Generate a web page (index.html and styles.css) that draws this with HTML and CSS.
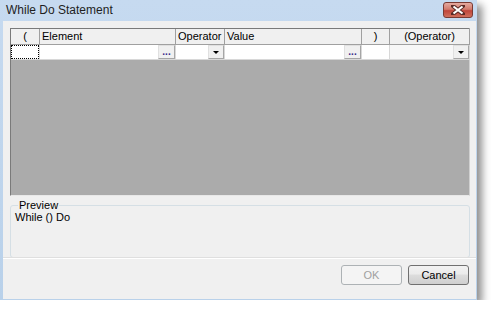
FILE: index.html
```html
<!DOCTYPE html>
<html lang="en">
<head>
    <meta charset="UTF-8">
    <title>While Do Statement</title>
    <link rel="stylesheet" href="styles.css">
</head>
<body>
    <div class="window">
        <div class="titlebar">
            <span class="title">While Do Statement</span>
            <div class="close">
                <svg width="14" height="10" viewBox="0 0 14 10">
                    <path d="M2 1 L12 9 M12 1 L2 9" stroke="#5a2a26" stroke-width="4" stroke-linecap="square"/>
                    <path d="M2.5 1.5 L11.5 8.5 M11.5 1.5 L2.5 8.5" stroke="#ffffff" stroke-width="2.2"/>
                </svg>
            </div>
        </div>
        <div class="client">
            <div class="main">
                <div class="grid">
                    <div class="row head">
                        <div class="cell center">(</div>
                        <div class="cell">Element</div>
                        <div class="cell">Operator</div>
                        <div class="cell">Value</div>
                        <div class="cell center">)</div>
                        <div class="cell center">(Operator)</div>
                    </div>
                    <div class="row data">
                        <div class="cell"><div class="focus"></div></div>
                        <div class="cell"><span class="ellipsis">...</span></div>
                        <div class="cell"><span class="drop"></span></div>
                        <div class="cell"><span class="ellipsis">...</span></div>
                        <div class="cell"></div>
                        <div class="cell shaded"><span class="drop"></span></div>
                    </div>
                    <div class="empty"></div>
                </div>
                <fieldset class="preview">
                    <legend>Preview</legend>
                    <div class="preview-text">While () Do</div>
                </fieldset>
            </div>
            <div class="buttons">
                <button class="btn" disabled>OK</button>
                <button class="btn">Cancel</button>
            </div>
        </div>
    </div>
</body>
</html>
```

FILE: styles.css
```css
body {
    margin: 0;
    background: #ffffff;
    font-family: "Liberation Sans", Arial, sans-serif;
    font-size: 11px;
    color: #000;
}
.window {
    width: 477px;
    height: 300px;
    display: flex;
    flex-direction: column;
    background: linear-gradient(#c6daf0, #b9d1ea);
    box-shadow: 5px 5px 8px rgba(0,0,0,0.45);
}
.titlebar {
    height: 21px;
    display: flex;
    align-items: center;
    justify-content: space-between;
    padding: 0 4px 0 6px;
}
.title {
    font-size: 12px;
    color: #1e1e1e;
    margin-top: -1px;
}
.close {
    width: 28px;
    height: 14px;
    margin-top: -2px;
    border: 1px solid #7a3a33;
    border-radius: 3px;
    background: linear-gradient(#e5aaa0, #d27a6c 45%, #c0453a 55%, #cf6f5c);
    display: flex;
    align-items: center;
    justify-content: center;
}
.client {
    flex: 1;
    margin: 0 1px 1px 3px;
    background: #f0f0f0;
    display: flex;
    flex-direction: column;
}
.main {
    padding: 7px 6px 0 7px;
    height: 236px;
    box-sizing: border-box;
}
.grid {
    height: 166px;
    border: 1px solid #7a7a7a;
    border-right-color: #d0d0d0;
    border-bottom-color: #e8e8e8;
    display: flex;
    flex-direction: column;
    background: #ababab;
}
.row {
    display: grid;
    grid-template-columns: 29px 136px 49px 137px 28px 80px;
}
.head {
    height: 16px;
    background: #f0f0f0;
}
.head .cell {
    border-right: 1px solid #a0a0a0;
    border-bottom: 1px solid #a0a0a0;
    padding: 0 0 0 2px;
    line-height: 15px;
}
.head .cell.center {
    text-align: center;
    padding: 0;
}
.data {
    height: 15px;
    background: #ffffff;
}
.data .cell {
    border-right: 1px solid #d8d8d8;
    border-bottom: 1px solid #d8d8d8;
    position: relative;
}
.data .cell.shaded {
    background: #f7f7f7;
}
.cell {
    box-sizing: border-box;
    white-space: nowrap;
    overflow: hidden;
}
.focus {
    height: 14px;
    border: 1px dotted #000;
    box-sizing: border-box;
}
.ellipsis {
    position: absolute;
    right: 0;
    top: 0;
    width: 17px;
    height: 14px;
    box-sizing: border-box;
    border: 1px solid #a6a6a6;
    border-top-color: #e0e0e0;
    border-left-color: #e0e0e0;
    background: #f0f0f0;
    color: #3a2a8a;
    font-size: 10px;
    line-height: 12px;
    text-align: center;
    font-weight: bold;
}
.drop {
    position: absolute;
    right: 0;
    top: 0;
    width: 16px;
    height: 14px;
    box-sizing: border-box;
    border: 1px solid #a6a6a6;
    border-top-color: #e0e0e0;
    border-left-color: #e0e0e0;
    background: #f0f0f0;
}
.drop::after {
    content: "";
    position: absolute;
    left: 4px;
    top: 5px;
    border-left: 3px solid transparent;
    border-right: 3px solid transparent;
    border-top: 3px solid #000;
}
.empty {
    flex: 1;
}
.preview {
    margin: 3px 0 0 0;
    padding: 0 4px;
    height: 59px;
    box-sizing: border-box;
    border: 1px solid #d5dfe5;
    border-radius: 3px;
    min-width: 0;
}
.preview legend {
    padding: 0 1px;
    margin-left: 3px;
    line-height: 13px;
}
.preview-text {
    line-height: 13px;
    margin-top: -1px;
}
.buttons {
    flex: 1;
    border-top: 1px solid #dfdfdf;
    box-shadow: inset 0 1px 0 #ffffff;
    display: flex;
    justify-content: flex-end;
    align-items: flex-start;
    gap: 6px;
    padding: 7px 7px 0 0;
}
.btn {
    width: 61px;
    height: 20px;
    font-family: "Liberation Sans", Arial, sans-serif;
    font-size: 11px;
    color: #000;
    border: 1px solid #707070;
    border-radius: 3px;
    background: linear-gradient(#f2f2f2, #ebebeb 45%, #dddddd 50%, #cfcfcf);
    padding: 0;
}
.btn:disabled {
    color: #a0a0a0;
    border-color: #adb2b5;
    background: #f4f4f4;
}
```
